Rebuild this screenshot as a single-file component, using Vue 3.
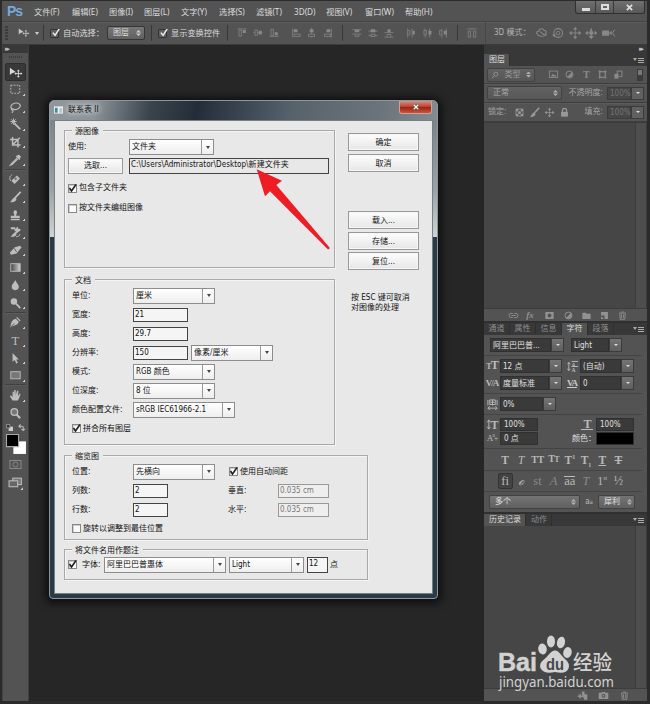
<script setup>
const menus = ['文件(F)', '编辑(E)', '图像(I)', '图层(L)', '文字(Y)', '选择(S)', '滤镜(T)', '3D(D)', '视图(V)', '窗口(W)', '帮助(H)']

const f = (d) => `<path fill="currentColor" d="${d}"/>`
const s = (d, w = 1) => `<path fill="none" stroke="currentColor" stroke-width="${w}" d="${d}"/>`

const icons = {
  move: f('M1 2v8l2.3-2L7.500 6.700z') + s('M10.500 5v7M7 8.500h7') + f('M10.500 3.800l1.600 2h-3.200zM10.500 13.200l1.600-2h-3.200zM6 8.500l2-1.600v3.200zM15 8.500l-2-1.600v3.200z'),
  marquee: '<rect x="2" y="2.500" width="10" height="9" fill="none" stroke="currentColor" stroke-dasharray="2 1.300"/>',
  lasso: s('M4 9C1 8 1.500 3.500 6 2.500s8 1.500 6 4.500-6 3-7.500 2-2.500 0-1 1 1.500 2-.5 3', 1.3),
  wand: s('M6 6l6.500 6.500', 2) + s('M5 0.500v7M1.500 4h7M2.500 1.500l5 5M7.500 1.500l-5 5', 1.1),
  crop: s('M4 1v9h9M1 4h9v9M5 9l7-7', 1.7),
  dropper: f('M9 2l2-1.500L13.500 3 12 5l.5.800-1 1L7.500 2.800l1-1z') + s('M9 4.500L3 10.500 1.500 12.500l2-.800L10 5.500', 1.2),
  heal: s('M4.500 10.500l6-6', 5) + s('M2 9C0 6 1 3 3.500 2', 1) + '<path d="M6 6.500h3M7.500 5v3" stroke="#555" stroke-width=".8"/>',
  brush: s('M13 1L6.500 8', 2) + f('M6.500 7l2 2c-1 3-3.500 4-7.500 3.500 2-.5 2-4 5.500-5.500z'),
  stamp: f('M5 3.500a2 2 0 1 1 4 0c0 1-1 2-1 4h4v2.500H2V7.500h4c0-2-1-3-1-4zM2 11h10v1.500H2z'),
  history: s('M2 2.500h5M10 1.500c-1 1-1 2-3.500 3.500l6-1L6 9', 2) + f('M6.500 7.500l2 2c-1 2-3.500 3-7 2.500 2-.5 2-3.500 5-4.500z') + s('M8 12c3 0 4-1 4-3'),
  eraser: f('M6.500 3.500L12.500 2 14 4 8.500 10.500 2 12 1 9.500z') + '<path d="M6 5l2.500 4" stroke="#555"/>',
  gradient: '<defs><linearGradient id="grad"><stop stop-color="#444"/><stop offset="1" stop-color="#d0d0d0"/></linearGradient></defs><rect x="2" y="3" width="10.500" height="8.500" fill="url(#grad)" stroke="currentColor"/>',
  drop: f('M7 1c1 3 4 5 4 7.500a4 4 0 0 1-8 0C3 6 6 4 7 1z'),
  dodge: '<circle cx="5.500" cy="5" r="3.600" fill="currentColor"/>' + s('M8 7.500l4.500 5', 2),
  pen: f('M9 1l4 4-1 1-4-4zM7.500 3l3.500 3.500c-1 3-3 4-6 4.500L1.500 13l.5-3.500c.5-3.500 2.500-6 5.500-6.500z') + '<path d="M2 12.500l4-4.500" stroke="#555"/>',
  type: '<text x="7" y="12" text-anchor="middle" font-family="Liberation Serif" font-size="14" fill="currentColor">T</text>',
  arrow: f('M4 1v10l2.500-2L8 13l2-1-2-3.500h3z'),
  rect: '<rect x="2" y="3" width="10.500" height="8" fill="#777" stroke="currentColor"/>',
  hand: f('M4 13L1 8l1-1 2 2V3h1.500v4L6 1h1.500v6L9 2h1.500L10 8l2-3 1 .5L11 11l-1 2z'),
  zoom: '<circle cx="6" cy="5.500" r="3.700" fill="#777" stroke="currentColor" stroke-width="1.500"/>' + s('M8.500 8.500l4 4', 2.4),
  alT: s('M2 2.500h12') + '<rect x="4" y="4" width="3" height="8" fill="none" stroke="currentColor"/>' + f('M9 4h4v4H9z'),
  alM: s('M2 7.500h12') + '<rect x="4" y="4" width="3" height="7" fill="#535353" stroke="currentColor"/>' + f('M9 5h4v5H9z'),
  alB: s('M2 12.500h12') + '<rect x="4" y="3" width="3" height="8" fill="none" stroke="currentColor"/>' + f('M9 7h4v4H9z'),
  alL: s('M3.500 2v12') + f('M5 3h5v4H5z') + '<rect x="5.500" y="9.500" width="8" height="3" fill="none" stroke="currentColor"/>',
  alC: s('M7.500 1v13') + f('M5 3h5v4H5z') + '<rect x="3.500" y="9.500" width="8" height="3" fill="#535353" stroke="currentColor"/>',
  alR: s('M12.500 2v12') + f('M6 3h5v4H6z') + '<rect x="3.500" y="9.500" width="8" height="3" fill="none" stroke="currentColor"/>',
  diT: s('M2 3.500h12M2 9.500h12') + f('M5 4h6v3H5z') + s('M5.500 10v2.500h5V10'),
  diM: s('M2 5.500h12M2 11.500h12') + f('M5 3h6v4H5z') + '<rect x="5.500" y="9.500" width="5" height="3" fill="#535353" stroke="currentColor"/>',
  diB: s('M2 7.500h12M2 13.500h12') + f('M6 3h4v4H6z') + s('M5.500 13v-3h5v3'),
  diL: s('M3.500 2v12M9.500 2v12') + f('M10 5h3v5h-3z') + s('M4 4.500h2.500v6H4'),
  diC: s('M5.500 2v12M11.500 2v12') + f('M10 5h4v5h-4z') + '<rect x="4" y="4.500" width="3" height="6" fill="#535353" stroke="currentColor"/>',
  diR: s('M6.500 2v12M12.500 2v12') + f('M9 5h4v5H9z') + s('M6 4.500H3.500v6H6'),
  auto: s('M6 5.500v8H3v-8zM13 5.500v8h-3v-8zM2 2.500h5M9 2.500h5M8 1v3'),
  orbit: s('M3 9c-2-1-2-3 1-3 0-3 5-4 6-1 3 0 4 3 1 4M2 9.500c3 3 8 3 11 0M6 6c1 3 4 4 7 5', 1.2),
  roll: '<circle cx="8" cy="8" r="5" fill="none" stroke="currentColor" stroke-width="1.200"/><circle cx="8" cy="8" r="2" fill="none" stroke="currentColor"/>' + f('M1 10l4-1-1 4z'),
  pan: s('M8 3v10M3 8h10') + f('M8 1l2.500 3h-5zM8 15l2.500-3h-5zM1 8l3-2.500v5zM15 8l-3-2.500v5z'),
  slide: s('M8 4v8M3 8h10', 1.2) + f('M8 2l1.500 3h-3zM8 15l3-3.500H5zM1 8l3-2.500v5zM15 8l-3-2.500v5zM6 6h4v4H6z'),
  cam: f('M1 5h8v6H1zM9 8l3-2.500v5z') + s('M15.500 4l-2.500 4 2.500 4'),
  image: '<rect x="2" y="3" width="12" height="9.500" fill="none" stroke="currentColor" stroke-width="1.300"/>' + f('M4 11l3-4 2 2 1-1 2.500 3z'),
  adjust: '<circle cx="8" cy="8" r="5" fill="none" stroke="currentColor" stroke-width="1.400"/>' + f('M11.500 4.500a5 5 0 0 1-7 7z'),
  tee: '<text x="8" y="13" text-anchor="middle" font-family="Liberation Serif" font-weight="bold" font-size="15" fill="currentColor">T</text>',
  shape: s('M4 4h8v8H4zM4 1.500v13M12 1.500v13M2 4h12M2 12h12', 1.2),
  smart: s('M6 8V3h7v8h-4', 1.4) + f('M2 7h6v7H2z'),
  checker: s('M3 3h10v10H3z', 1.2) + f('M3 3h3v3H3zM10 3h3v3h-3zM6 6h4v4H6zM3 10h3v3H3zM10 10h3v3h-3z'),
  lock: s('M5 8V5a3 3 0 0 1 6 0v3', 1.6) + f('M3 7h10v7H3z'),
  link: s('M7 5H4.500a3 3 0 0 0 0 6H7M9 5h2.500a3 3 0 0 1 0 6H9M5 8h6', 1.3),
  mask: '<path fill="currentColor" fill-rule="evenodd" d="M2 3h12v10H2zM8 5.200a2.800 2.800 0 1 0 .01 0z"/>',
  folder: f('M2 4h5l1 1.500h6V13H2z'),
  newl: f('M3 3h10v10H8V8H3z') + f('M3 9l4 4H3z'),
  trash: s('M4 5l.7 8.500h6.600L12 5M3 4.500h10M6 3h4M6.500 6.500v5M9.500 6.500v5', 1.3),
  snap: '<path fill="currentColor" fill-rule="evenodd" d="M1 4h4l1-1h4l1 1h4v9H1zM8 5.500a2.800 2.800 0 1 0 .01 0z"/><circle cx="8" cy="8.300" r="1.300" fill="currentColor"/>',
  newdoc: s('M1 9h7M4.500 5.500v7', 2) + f('M7 2h4v4h4v8h-5v-3H8z')
}

const toolGroups = [
  ['move', 'marquee', 'lasso', 'wand', 'crop', 'dropper'],
  ['heal', 'brush', 'stamp', 'history', 'eraser', 'gradient', 'drop', 'dodge'],
  ['pen', 'type', 'arrow', 'rect'],
  ['hand', 'zoom']
]
const noFlyout = ['move', 'zoom']

const docRows = [
  { label: '单位:', value: '厘米', select: 82 },
  { label: '宽度:', value: '21' },
  { label: '高度:', value: '29.7' },
  { label: '分辨率:', value: '150', unit: '像素/厘米' },
  { label: '模式:', value: 'RGB 颜色', select: 82 },
  { label: '位深度:', value: '8 位', select: 82 },
  { label: '颜色配置文件:', value: 'sRGB IEC61966-2.1', select: 102 }
]
const spacing = [
  { label: '列数:', value: '2', side: '垂直:' },
  { label: '行数:', value: '2', side: '水平:' }
]
</script>

<template>
  <div class="app">
    <header class="menubar">
      <b class="ps">Ps</b>
      <nav class="menus"><span v-for="m in menus" :key="m">{{ m }}</span></nav>
      <div class="winctl">
        <i><u class="min"></u></i><i><u class="max"></u></i>
        <i><svg viewBox="0 0 8 8" width="7" height="7"><path d="M1 1l6 6M7 1L1 7" stroke="#ddd" stroke-width="2" /></svg></i>
      </div>
    </header>

    <div class="options">
      <span class="grip"></span>
      <svg class="mv" viewBox="0 0 16 16" v-html="icons.move"></svg>
      <span class="tri"></span>
      <span class="vs"></span>
      <span class="dchk"><svg viewBox="0 0 10 10"><path d="M2 4l2.500 3L9 0" /></svg></span>
      <span class="w44">自动选择：</span>
      <span class="dsel w38"><em>图层</em><b class="ud"></b></span>
      <span class="vs"></span>
      <span class="dchk"><svg viewBox="0 0 10 10"><path d="M2 4l2.500 3L9 0" /></svg></span>
      <span class="w58">显示变换控件</span>
      <span class="vs"></span>
      <div class="ics"><svg v-for="n in ['alT', 'alM', 'alB']" :key="n" viewBox="0 0 16 16" v-html="icons[n]"></svg></div>
      <div class="ics"><svg v-for="n in ['alL', 'alC', 'alR']" :key="n" viewBox="0 0 16 16" v-html="icons[n]"></svg></div>
      <span class="vs"></span>
      <div class="ics"><svg v-for="n in ['diT', 'diM', 'diB']" :key="n" viewBox="0 0 16 16" v-html="icons[n]"></svg></div>
      <div class="ics"><svg v-for="n in ['diL', 'diC', 'diR']" :key="n" viewBox="0 0 16 16" v-html="icons[n]"></svg></div>
      <span class="vs"></span>
      <div class="ics one"><svg viewBox="0 0 16 16" v-html="icons.auto"></svg></div>
      <span class="vs soft"></span>
      <span class="mode">3D 模式：</span>
      <div class="ics three"><svg v-for="n in ['orbit', 'roll', 'pan', 'slide', 'cam']" :key="n" viewBox="0 0 16 16" v-html="icons[n]"></svg></div>
    </div>

    <main class="work">
      <aside class="tools">
        <div class="thead">▸▸</div>
        <div class="tgrip"></div>
        <div v-for="(g, i) in toolGroups" :key="i" class="tgroup">
          <div v-for="t in g" :key="t" class="tool" :class="{ on: t === 'move', fly: !noFlyout.includes(t) }">
            <svg viewBox="0 0 14 14" v-html="icons[t]"></svg>
          </div>
        </div>
        <div class="mini">
          <svg viewBox="0 0 8 8"><path fill="#ccc" d="M3 3h5v5H3z" /><path fill="#333" stroke="#999" d="M.5.5h4v4h-4z" /></svg>
          <svg viewBox="0 0 8 8"><path fill="none" stroke="#bbb" stroke-width="1.200" d="M1 2.500h3.500c1 0 1.500.5 1.500 1.500v3M3 .5l-2 2 2 2M4 5.500l2 2 2-2" /></svg>
        </div>
        <svg class="swatch" viewBox="0 0 20 20"><path fill="#fff" d="M7 7h12v12H7z" /><path fill="#000" stroke="#aaa" d="M.5.5h11.500v11.500H.5z" /></svg>
        <svg class="qm" viewBox="0 0 12 10"><rect x=".5" y=".5" width="11" height="8" fill="none" stroke="#888" /><circle cx="6" cy="4.500" r="2.500" fill="none" stroke="#888" /></svg>
        <svg class="scr" viewBox="0 0 14 12"><rect x="4.500" y="1" width="8" height="6" fill="#777" stroke="#bbb" /><rect x="1" y="3.500" width="8" height="5.500" fill="#666" stroke="#bbb" /><path fill="#ccc" d="M14 12v-2.500L11.500 12z" /></svg>
      </aside>

      <section class="canvas"></section>

      <aside class="panels">
        <div class="phead">▸▸</div>
        <div class="tabs"><span class="on first">图层</span><i class="pm"></i></div>
        <div class="lrow r1">
          <span class="psel kind"><svg viewBox="0 0 10 10"><circle cx="6" cy="4" r="2.500" fill="none" stroke="currentColor" /><path d="M4 6L1 9" stroke="currentColor" /></svg><em>类型</em><b class="ud"></b></span>
          <div class="lic"><svg v-for="n in ['image', 'adjust', 'tee', 'shape', 'smart']" :key="n" viewBox="0 0 16 16" v-html="icons[n]"></svg></div>
          <span class="toggle"></span>
        </div>
        <div class="lrow r2">
          <span class="psel blend"><em>正常</em><b class="ud"></b></span>
          <span class="lt">不透明度:</span><span class="pct">100%</span><span class="dd"></span>
        </div>
        <div class="lrow r3">
          <span class="lk">锁定:</span>
          <div class="lic2"><svg v-for="n in ['checker', 'brush', 'pan', 'lock']" :key="n" :viewBox="n === 'brush' ? '0 0 14 14' : '0 0 16 16'" v-html="icons[n]"></svg></div>
          <span class="lt">填充:</span><span class="pct">100%</span><span class="dd"></span>
        </div>
        <div class="list l1"><i></i></div>
        <div class="pfoot f1">
          <svg viewBox="0 0 16 16" v-html="icons.link"></svg><em class="fx">fx</em>
          <svg v-for="n in ['mask', 'adjust', 'folder', 'newl', 'trash']" :key="n" viewBox="0 0 16 16" v-html="icons[n]"></svg>
        </div>

        <div class="tabs t2"><span>通道</span><span>属性</span><span>信息</span><span class="on">字符</span><span>段落</span><i class="pm"></i></div>
        <div class="char">
          <div class="crow fam"><span class="combo c73"><em>阿里巴巴普...</em><b class="dd"></b></span><span class="combo c50"><em>Light</em><b class="dd"></b></span></div>
          <div class="cgrid">
            <span class="ci"><small>T</small>T</span><span class="combo c61"><em>12 点</em><b class="dd"></b></span>
            <span class="ci"><svg viewBox="0 0 12 12"><path d="M2 2v8M.5 3.500L2 1.500l1.500 2M.5 8.500L2 10.500l1.500-2M5 6h7M5 .5h7" fill="none" stroke="currentColor" /><text x="5" y="6" font-size="6" fill="currentColor">A</text><text x="5" y="12" font-size="6" fill="currentColor">A</text></svg></span><span class="combo c54"><em>(自动)</em><b class="dd"></b></span>
            <span class="ci va">V/A</span><span class="combo c61"><em>度量标准</em><b class="dd"></b></span>
            <span class="ci va box">VA</span><span class="combo c54"><em>0</em><b class="dd"></b></span>
          </div>
          <div class="crow pctrow"><span class="ci"><svg viewBox="0 0 12 12"><path d="M1 1v6M11 1v6M3 1h6v5H3zM4 3.500h4M6 1v6M1 10h10M3 8L1 10l2 2M9 8l2 2-2 2" fill="none" stroke="currentColor" /></svg></span><span class="combo c55"><em>0%</em><b class="dd"></b></span></div>
          <div class="cgrid g2">
            <span class="ci"><svg viewBox="0 0 12 12"><path d="M2 1.500v9M.3 3.500L2 1l1.700 2.500M.3 8.500L2 11l1.700-2.500" fill="none" stroke="currentColor" /><text x="4" y="10.500" font-size="12.500" fill="currentColor">T</text></svg></span><span class="fld">100%</span><span class="ci under">T</span><span class="fld">100%</span>
            <span class="ci sm">A<sup>a</sup><small>+</small></span><span class="fld">0 点</span><span class="col">颜色：</span><span class="fld blk"></span>
          </div>
          <div class="glyphs"><b>T</b><i>T</i><b class="n">TT</b><b class="n">T<small>T</small></b><b>T<sup>1</sup></b><b>T<sub>1</sub></b><b class="ul">T</b><b class="st">T</b></div>
          <div class="glyphs ot"><span class="fi">fi</span><i>ℴ</i><span class="dim">st</span><i class="dim">A</i><span class="ov">aa</span><i class="dim">T</i><span class="sm1">1<sup>st</sup></span><span>½</span></div>
          <div class="crow last"><span class="psel many"><em>多个</em><b class="ud"></b></span><span class="aa">a<small>a</small></span><span class="psel sharp"><em>犀利</em><b class="ud"></b></span></div>
        </div>

        <div class="tabs t3"><span class="on">历史记录</span><span>动作</span><i class="pm"></i></div>
        <div class="list l2"><i></i></div>
        <div class="pfoot f2"><svg v-for="n in ['newdoc', 'snap', 'trash']" :key="n" viewBox="0 0 16 16" v-html="icons[n]"></svg></div>
      </aside>
    </main>

    <section class="dialog">
      <header class="dtitle"><svg viewBox="0 0 10 8"><path fill="#eee" d="M0 0h10v8H0z" /><path fill="#3a8d96" d="M1 1.500h3V7H1z" /><path fill="#b6c4cf" d="M6 2h3v5H6z" /></svg><span>联系表 II</span><b class="x"><svg viewBox="0 0 8 8"><path d="M1 1l6 6M7 1L1 7" stroke="#444" stroke-width="3" /><path d="M1 1l6 6M7 1L1 7" stroke="#fff" stroke-width="1.800" /></svg></b></header>
      <div class="dbody">
        <div class="top">
          <div class="left">
            <div class="group g-src">
              <div class="leg">源图像</div>
              <div class="row use"><label>使用:</label><span class="sel s85"><em>文件夹</em><b></b></span></div>
              <div class="row pick"><span class="btn small">选取...</span><span class="inp path">C:\Users\Administrator\Desktop\新建文件夹</span></div>
              <div class="row inc"><span class="chk on"><svg viewBox="0 0 9 9"><path d="M1.500 4l2 3L8 .5" /></svg></span>包含子文件夹</div>
              <div class="row grp"><span class="chk"></span>按文件夹编组图像</div>
            </div>
            <div class="group g-doc">
              <div class="leg">文档</div>
              <div v-for="r in docRows" :key="r.label" class="row std">
                <label>{{ r.label }}</label>
                <span v-if="r.select" class="sel" :style="{ width: r.select + 'px' }"><em>{{ r.value }}</em><b></b></span>
                <span v-else class="inp w55">{{ r.value }}</span>
                <span v-if="r.unit" class="sel unit"><em>{{ r.unit }}</em><b></b></span>
              </div>
              <div class="row std"><span class="chk on"><svg viewBox="0 0 9 9"><path d="M1.500 4l2 3L8 .5" /></svg></span>拼合所有图层</div>
            </div>
          </div>
          <div class="right">
            <span class="btn">确定</span><span class="btn">取消</span>
            <span class="btn gap">载入...</span><span class="btn">存储...</span><span class="btn">复位...</span>
            <p>按 ESC 键可取消<br>对图像的处理</p>
          </div>
        </div>
        <div class="group g-thumb">
          <div class="leg">缩览图</div>
          <div class="row std"><label>位置:</label><span class="sel s82"><em>先横向</em><b></b></span><span class="chk on auto"><svg viewBox="0 0 9 9"><path d="M1.500 4l2 3L8 .5" /></svg></span>使用自动间距</div>
          <div v-for="r in spacing" :key="r.label" class="row std"><label>{{ r.label }}</label><span class="inp w35">{{ r.value }}</span><label class="side">{{ r.side }}</label><span class="inp off">0.035 cm</span></div>
          <div class="row std"><span class="chk"></span>旋转以调整到最佳位置</div>
        </div>
        <div class="group g-cap">
          <div class="leg">将文件名用作题注</div>
          <div class="row cap"><span class="chk on"><svg viewBox="0 0 9 9"><path d="M1.500 4l2 3L8 .5" /></svg></span><label>字体:</label><span class="sel s122"><em>阿里巴巴普惠体</em><b></b></span><span class="sel s75"><em>Light</em><b></b></span><span class="inp pt">12</span>点</div>
        </div>
      </div>
    </section>

    <svg class="pointer" viewBox="0 0 76 88"><path fill="#ee1c24" d="M2.700 3.300L28 14.700 22.300 19 75.500 81.500Q76 84 73.500 83L16 25.300 11 30.300z" /></svg>

    <svg class="mark" viewBox="0 0 120 62">
      <g fill="#d2d2d2">
        <text x="0" y="37.500" font-family="Liberation Sans" font-weight="bold" font-size="26" stroke="#d2d2d2" stroke-width=".5" textLength="39" lengthAdjust="spacingAndGlyphs">Bai</text>
        <ellipse cx="44.500" cy="16" rx="4.300" ry="5.500" transform="rotate(-10 44.500 16)" /><ellipse cx="53" cy="8.500" rx="4" ry="6" /><ellipse cx="63" cy="9.500" rx="4" ry="5.800" transform="rotate(14 63 9.500)" /><ellipse cx="69.500" cy="19.500" rx="4.200" ry="5.500" transform="rotate(14 69.500 19.500)" />
        <path d="M57 17.500c4 0 6 5 9.500 8s5.500 6 4 10-6 5-13.500 3.500c-7 1.500-12 .5-14-3s-.5-7 3.500-10 6-8.500 10.500-8.500z" />
        <text x="75" y="37" font-family="Noto Sans CJK SC" font-weight="500" font-size="20" textLength="39" lengthAdjust="spacingAndGlyphs">经验</text>
        <text x="1" y="54" font-family="Noto Sans" font-size="13.500" textLength="115" lengthAdjust="spacingAndGlyphs">jingyan.baidu.com</text>
      </g>
      <text x="48" y="36.500" fill="#464646" font-family="Liberation Sans" font-weight="bold" font-size="16" textLength="18" lengthAdjust="spacingAndGlyphs">du</text>
    </svg>
  </div>
</template>

<style>
body { margin: 0; background: #262626; }
</style>

<style scoped>
* { box-sizing: border-box; }
em, i { font-style: normal; }
.app { position: relative; width: 650px; height: 704px; overflow: hidden; background: #535353; border: 1px solid #2b2b2b; border-width: 1px 3px 3px 2px; font: 8px/10px "DejaVu Sans Condensed", "Noto Sans CJK SC", sans-serif; color: #dcdcdc; white-space: nowrap; }
svg { display: block; }

.menubar { display: flex; height: 20px; align-items: center; }
.ps { width: 32px; padding-left: 5px; color: #76a8d8; font: bold 14px/18px "Liberation Sans", sans-serif; letter-spacing: -1px; }
.menus { flex: 1; display: grid; grid-template-columns: 38px 37px 35px 37px 38px 37px 38px 32px 39px 40px auto; padding-top: 1px; font-family: "Noto Sans", "Noto Sans CJK SC", sans-serif; font-size: 8.2px; }
.winctl { display: flex; align-self: flex-start; width: 70px; height: 13px; margin-right: 2px; border: 1px solid #303030; border-top: 0; border-radius: 0 0 3px 3px; background: linear-gradient(#707070, #585858); }
.winctl i { flex: 0 0 20px; display: flex; align-items: center; justify-content: center; border-right: 1px solid #3a3a3a; }
.winctl i:nth-child(2) { flex-basis: 18px; }
.winctl i:last-child { flex: 1; border: 0; }
.min { width: 8px; height: 3px; margin-top: 4px; background: #ddd; }
.max { width: 8px; height: 6px; border: 2px solid #ddd; }

.options { display: flex; align-items: center; height: 24px; border-top: 1px solid #444; border-bottom: 1px solid #3b3b3b; box-shadow: inset 0 1px #5c5c5c; }
.grip { width: 3px; height: 14px; margin: 0 9px 0 3px; background: repeating-linear-gradient(#3b3b3b 0 2px, transparent 2px 3px); }
.mv { width: 14px; height: 12px; color: #c8c8c8; margin-right: 4px; }
.tri { border: 2px solid transparent; border-top: 3px solid #ccc; border-bottom: 0; margin-right: 4px; }
.vs { flex: none; width: 1px; height: 16px; background: #383838; margin-right: 6px; }
.vs.soft { margin-right: 8px; height: 22px; background: #474747; }
.dchk { width: 9px; height: 9px; margin-right: 4px; border: 1px solid #333; background: #606060; border-radius: 1px; }
.dchk svg { width: 9px; height: 9px; margin-top: -1px; }
.dchk path, .chk path { fill: none; stroke: #eee; stroke-width: 1.6; }
.chk path { stroke: #222; }
.w44 { width: 44px; overflow: hidden; font-size: 8.2px; }
.w58 { width: 56px; font-size: 8.2px; }
.dsel, .psel { display: flex; align-items: center; justify-content: space-between; height: 14px; padding: 0 3px 0 5px; border: 1px solid #363636; border-radius: 2px; background: linear-gradient(#777, #606060); }
.w38 { width: 38px; margin-right: 6px; }
.ud { width: 5px; height: 6px; background: #ccc; clip-path: polygon(50% 0, 100% 40%, 0 40%, 0 60%, 100% 60%, 50% 100%, 0 60%, 0 40%); }
.ics { display: flex; width: 48px; margin-right: 6px; color: #888; }
.ics svg { width: 16px; height: 12px; }
.ics.one { width: 16px; margin-right: 5px; }
.mode { width: 40px; color: #b4b4b4; }
.ics.three { width: 82px; }
.ics.three svg { width: 16.400px; height: 14px; }

.work { display: flex; height: 656px; }
.tools { width: 27px; background: #535353; border-right: 1px solid #3e3e3e; border-left: 1px solid #444; }
.thead, .phead { height: 8px; background: #383838; color: #bbb; font: 7px/8px "DejaVu Sans", sans-serif; letter-spacing: -2px; padding-left: 2px; }
.tgrip { width: 14px; height: 2px; margin: 3px auto 5px; background: repeating-linear-gradient(90deg, #3b3b3b 0 1px, transparent 1px 2px); }
.tgroup { border-bottom: 1px solid #404040; box-shadow: 0 1px #5c5c5c; margin: 0 2px 1.300px; }
.tgroup:nth-last-of-type(2) { border: 0; box-shadow: none; margin-bottom: 0; }
.tool { display: flex; align-items: center; justify-content: center; height: 17.600px; color: #bdbdbd; }
.tool svg { width: 12.500px; height: 12.500px; overflow: visible; }
.tool.on { background: #393939; border: 1px solid #2d2d2d; border-radius: 2px; color: #ddd; }
.tool.fly { background: linear-gradient(135deg, transparent 50%, #ccc 50%) no-repeat 18px 13px / 2px 2px; }
.mini { display: flex; gap: 5px; padding: 2px 0 3px 3px; }
.mini svg { width: 7px; height: 7px; }
.swatch { width: 21px; height: 21px; margin-left: 3px; }
.qm { width: 13px; height: 10px; margin: 5px 0 0 6px; }
.scr { width: 15px; height: 13px; margin: 7px 0 0 5px; }
.canvas { flex: 1; background: #262626; }

.panels { width: 163px; height: 656px; background: #535353; color: #c4c4c4; }
.phead { padding: 0 5px 0 0; text-align: right; height: 9px; }
.tabs { display: flex; height: 12px; background: #383838; color: #8d8d8d; }
.tabs span { padding: 0 4px 0 5px; line-height: 12px; border-right: 1px solid #2f2f2f; }
.tabs .on { background: #535353; color: #ddd; }
.pm { width: 6px; height: 5px; margin: 4px 3px 0 auto; background: repeating-linear-gradient(#aaa 0 1px, transparent 1px 2px); }
.pm::before { content: ""; display: block; width: 0; margin-left: -5px; border: 2px solid transparent; border-top: 3px solid #aaa; border-bottom: 0; }
.lrow { display: flex; align-items: center; height: 19px; padding-left: 3px; border-bottom: 1px solid #3d3d3d; box-shadow: 0 1px #5b5b5b; color: #a6a6a6; }
.r1 { height: 18px; }
.psel { background: linear-gradient(#626262, #575757); border-color: #424242; }
.kind { width: 48px; padding-left: 3px; color: #999; }
.kind svg { width: 8px; height: 8px; }
.ud { flex: none; }
.psel .ud { opacity: .75; }
.lic { display: flex; gap: 5.300px; margin-left: 13px; color: #8a8a8a; }
.lic svg { width: 11px; height: 11px; }
.toggle { width: 6px; height: 12px; margin: 0 4px 0 auto; background: linear-gradient(#777 50%, #3c3c3c 50%); border: 1px solid #3a3a3a; }
.blend { width: 75px; color: #aaa; }
.lt { flex: 1; text-align: right; padding-right: 4px; }
.pct { width: 24px; height: 13px; padding-left: 2px; background: #474747; border: 1px solid #3b3b3b; line-height: 12px; color: #747474; }
.dd { flex: none; width: 13px; height: 13px; background: linear-gradient(#747474, #5e5e5e); border: 1px solid #3b3b3b; display: flex; align-items: center; justify-content: center; }
.lrow .dd { margin-right: 3px; background: #606060; }
.dd::after { content: ""; border: 2px solid transparent; border-top: 2.500px solid #ddd; border-bottom: 0; }
.lk { width: 27px; padding-left: 1px; }
.lic2 { display: flex; gap: 4px; color: #999; }
.lic2 svg { width: 11px; height: 11px; }
.list { display: flex; justify-content: flex-end; background: #464646; border-right: 1px solid #3c3c3c; }
.list i { width: 11px; background: #4e4e4e; border-left: 1px solid #3e3e3e; }
.l1 { height: 186px; border-top: 1px solid #3c3c3c; }
.pfoot { display: flex; align-items: center; border-top: 1px solid #3c3c3c; color: #929292; }
.pfoot svg { width: 11px; height: 11px; }
.f1 { height: 13px; padding-left: 24px; gap: 7.200px; }
.fx { width: 11px; font: italic bold 9px/10px "Liberation Serif", serif; }
.t2 { border-top: 2px solid #303030; box-sizing: content-box; height: 12px; }
.t2 span { padding: 0 4.500px; }
.char { height: 177px; display: flex; flex-direction: column; color: #e0e0e0; }
.crow { display: flex; align-items: center; }
.combo { display: flex; height: 14px; align-items: center; }
.combo em { flex: 1; height: 14px; padding-left: 2px; line-height: 13px; background: #3a3a3a; border: 1px solid #303030; overflow: hidden; }
.combo .dd { height: 14px; }
.c73 { width: 74px; margin-right: 7px; } .c50 { width: 51px; } .c61 { width: 62px; } .c54 { width: 54px; } .c55 { width: 56px; }
.fam { height: 21px; padding: 0 0 0 6px; }
.crow, .cgrid, .glyphs { border-bottom: 1px solid #444; margin-right: 5px; }
.cgrid { display: grid; grid-template-columns: 16px 64px 16px 54px; grid-auto-rows: 17px; align-items: center; align-content: center; height: 38px; }
.ci { color: #bbb; font: bold 12px/12px "Liberation Serif", serif; text-align: center; letter-spacing: -1px; }
.ci small { font-size: 8px; }
.ci svg { width: 11px; height: 11px; margin: auto; overflow: visible; }
.va { font-size: 9px; }
.box { color: #ccc; text-decoration: underline; }
.pctrow { height: 21px; }
.pctrow .ci { width: 16px; }
.g2 { grid-template-columns: 16px 80px 16px 38px; grid-auto-rows: 14.300px; height: 34px; }
.fld { width: 38px; height: 13px; padding-left: 3px; line-height: 12px; background: #3a3a3a; border: 1px solid #303030; }
.blk { background: #000; }
.under { border-bottom: 1px solid #bbb; line-height: 10px; margin: 0 3px 0 1px; }
.sm { font-size: 9px; font-weight: normal; } .sm sup { font-size: 6px; line-height: 0; }
.col { margin-left: -8px; }
.glyphs { display: grid; grid-template-columns: repeat(8, 16.200px); align-items: center; justify-items: center; height: 22px; padding-left: 13px; color: #b8b8b8; font: 11.500px/14px "Liberation Serif", serif; }
.glyphs i { font-style: italic; }
.glyphs .n { font-size: 10px; letter-spacing: -.5px; }
.glyphs small { font-size: 8px; } .glyphs sup, .glyphs sub { font-size: 6px; line-height: 0; }
.ul { text-decoration: underline; } .st { text-decoration: line-through; }
.ot { height: 21px; font-size: 12.500px; }
.fi { width: 15px; height: 16px; line-height: 15px; text-align: center; background: #434343; border: 1px solid #333; border-radius: 2px; }
.dim { color: #888; } .ov { border-top: 1px solid #bbb; line-height: 9px; } .sm1 { font-size: 12px; }
.last { flex: 1; border: 0; padding-left: 5px; }
.many { width: 91px; } .sharp { width: 37px; padding: 0 2px 0 5px; }
.last .psel { background: linear-gradient(#747474, #606060); }
.aa { width: 18px; text-align: center; color: #bbb; } .aa small { font-size: 6px; }
.t3 { border-top: 2px solid #303030; box-sizing: content-box; }
.l2 { height: 162px; }
.f2 { height: 13px; gap: 10px; padding-left: 93px; }

.dialog { position: absolute; left: 47px; top: 99px; width: 389px; height: 499px; padding: 0 5px 5px; border: 1px solid #8d979d; border-radius: 5px 5px 4px 4px; background: linear-gradient(100deg, #8f979c 0, #8b9398 12%, #3a444d 26%, #222d37 38%, #56626b 62%, #6b747a 85%, #858c91 100%) no-repeat 0 0 / 100% 19px, linear-gradient(#7c858b, #9ba2a7 60%, #d0d3d5) no-repeat 0 19px / 100% 117px, #2a3a47; box-shadow: 0 1px 8px 3px rgba(0, 0, 0, .7); color: #111; }
.dtitle { display: flex; height: 19px; }
.dtitle > svg { width: 9px; height: 8px; margin: 5px 5px 0 -1px; }
.dtitle > span { align-self: flex-start; line-height: 11px; margin-top: 3px; text-shadow: 0 0 5px #fff, 0 0 8px #ddd; }
.x { display: flex; align-items: center; justify-content: center; width: 33px; height: 13px; margin-left: auto; border: 1px solid #c9a39b; border-top: 0; border-radius: 0 0 3px 3px; background: linear-gradient(#cf9285, #b94331 48%, #9e1f0d 50%, #c9553a); }
.x svg { width: 8px; height: 6px; }
.dbody { height: 474px; margin: 0 -1px; padding: 9px 0 0 9px; background: #e8e8e8; border: 1px solid #777f84; }
.top { display: flex; }
.group { width: 271px; border: 1px solid #a9a9a9; box-shadow: inset 1px 1px #f4f4f4, 1px 1px #f4f4f4; }
.leg { width: max-content; height: 12px; margin: -5px 0 0 7px; padding: 0 4px 0 3px; line-height: 12px; background: #e8e8e8; }
.g-src { height: 138px; }
.g-doc { height: 166px; margin-top: 11px; }
.g-thumb { width: 304px; height: 85px; margin-top: 10px; }
.g-cap { width: 304px; height: 31px; margin-top: 9px; }
.row { display: flex; align-items: center; height: 16px; padding-left: 3px; }
.use { margin-top: 1px; } .use label { width: 61px; }
.pick { margin-top: 3px; }
.inc { margin-top: 6px; } .grp { margin-top: 4px; }
.std { height: 19px; padding-left: 7px; }
.leg + .std { margin-top: -1px; }
.std label { width: 61px; } .std .side { width: 50px; margin-left: 60px; }
.chk { flex: none; width: 9px; height: 9px; margin-right: 2px; border: 1px solid #888; background: #fafafa; box-shadow: inset 1px 1px #ccc; }
.chk svg { width: 9px; height: 9px; margin: -1px; }
.auto { margin-left: 14px; }
.sel { display: flex; height: 16px; border: 1px solid #8d8d8d; background: linear-gradient(#fff, #eee); }
.sel em { flex: 1; padding-left: 2px; line-height: 13px; }
.sel b { width: 12px; border-left: 1px solid #999; display: flex; align-items: center; justify-content: center; }
.sel b::after { content: ""; border: 2.500px solid transparent; border-top: 3px solid #444; border-bottom: 0; }
.s85 { width: 85px; } .s82 { width: 82px; } .unit { width: 82px; margin-left: 3px; }
.inp { height: 14px; padding-left: 1px; line-height: 11px; border: 1px solid #444; background: #f5f5f5; }
.w55 { width: 55px; } .w35 { width: 35px; }
.off { width: 51px; border-color: #999; background: #eee; color: #777; }
.path { width: 200px; height: 16px; background: #e8e8e8; line-height: 12px; letter-spacing: .05px; }
.btn { display: block; width: 71px; height: 18px; line-height: 17px; text-align: center; border: 1px solid #999; background: linear-gradient(#fdfdfd, #e6e6e6); box-shadow: inset 0 0 0 1px #f7f7f7; }
.btn.small { width: 55px; height: 16px; line-height: 14px; margin-right: 6px; }
.right { display: flex; flex-direction: column; gap: 2.500px; padding: 3px 0 0 13px; }
.gap { margin-top: 37px; }
.right p { margin: 20px 0 0 3px; line-height: 10px; }
.cap { margin-top: -1px; height: 17px; } .cap label { width: 22px; margin-left: 3px; } .cap .chk { width: 9px; }
.s122 { width: 122px; margin-right: 3px; } .s75 { width: 75px; margin-right: 3px; }
.pt { width: 21px; height: 16px; margin-right: 2px; line-height: 12px; }
.pointer { position: absolute; left: 252px; top: 165px; width: 76px; height: 88px; }
.mark { position: absolute; left: 496px; top: 632px; width: 120px; height: 62px; }
</style>
